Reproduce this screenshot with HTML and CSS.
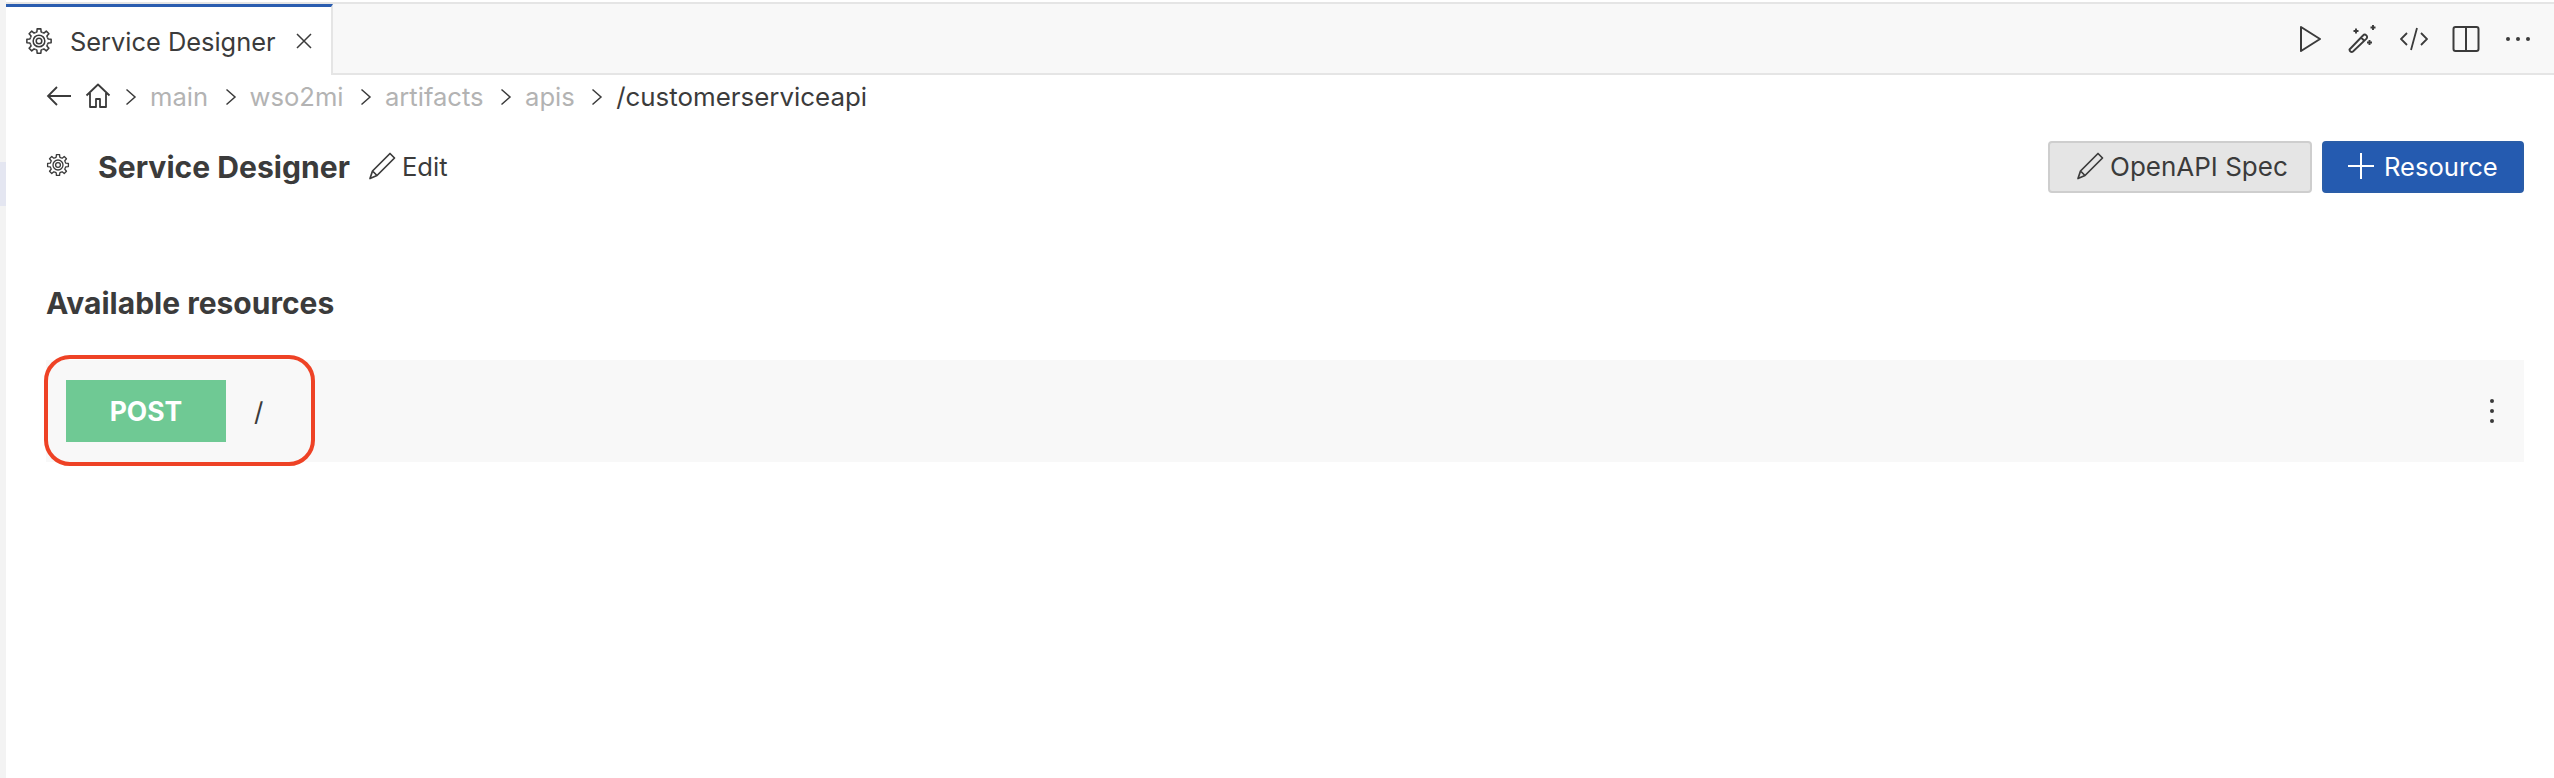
FILE: index.html
```html
<!DOCTYPE html>
<html lang="en">
<head>
    <meta charset="UTF-8">
    <meta name="viewport" content="width=device-width, initial-scale=1.0">
    <title>Service Designer</title>
    <link rel="stylesheet" href="styles.css">
</head>
<body>
<svg class="defs" width="0" height="0">
    <symbol id="gear" viewBox="0 0 24 24">
        <g fill="none" stroke="currentColor" stroke-width="1.3" stroke-linejoin="round">
            <path id="tooth" d="M9 4.8l1.2-.6.2-2.6h3.2l.2 2.6 1.2.6"/>
            <use href="#tooth" transform="rotate(45 12 12)"/>
            <use href="#tooth" transform="rotate(90 12 12)"/>
            <use href="#tooth" transform="rotate(135 12 12)"/>
            <use href="#tooth" transform="rotate(180 12 12)"/>
            <use href="#tooth" transform="rotate(225 12 12)"/>
            <use href="#tooth" transform="rotate(270 12 12)"/>
            <use href="#tooth" transform="rotate(315 12 12)"/>
            <circle cx="12" cy="12" r="5"/>
            <circle cx="12" cy="12" r="2.4"/>
        </g>
    </symbol>
    <symbol id="pencil" viewBox="0 0 28 28">
        <path d="M22 1.500l4.500 4.500L9 23.500l-7 3 2.500-7.500zM4.500 19l4.500 4.500" fill="none" stroke="currentColor" stroke-width="1.700" stroke-linejoin="round"/>
    </symbol>
</svg>

<div class="app">
    <div class="side-strip">
        <div class="side-mark"></div>
    </div>
    <div class="main">
        <div class="tab-bar">
            <div class="tab">
                <svg class="tab-gear"><use href="#gear"/></svg>
                <span class="tab-title">Service Designer</span>
                <svg class="tab-close" viewBox="0 0 18 18"><path d="M2 2l14 14M16 2L2 16" stroke="currentColor" stroke-width="1.500" fill="none"/></svg>
            </div>
            <div class="tab-actions">
                <svg class="act" viewBox="0 0 28 28"><path d="M5 2L24 14 5 26z" fill="none" stroke="currentColor" stroke-width="2" stroke-linejoin="round"/></svg>
                <svg class="act" viewBox="0 0 28 28" fill="none" stroke="currentColor"><path d="M1.500 24.500l13.500-14a2.300 2.300 0 0 1 3.500 3.200L5 26.500a2.200 2.200 0 0 1-3.500-2zM13 12.500l3.500 3.500" stroke-width="1.900"/><path d="M8 3.500v5M5.500 6h5M25 0v5M22.500 2.500h5M21.500 15v5M19 17.500h5" stroke-width="1.900"/></svg>
                <svg class="act" viewBox="0 0 28 28" fill="none" stroke="currentColor" stroke-width="1.800"><path d="M7 8l-6 6 6 6M21 8l6 6-6 6M17 3l-6 22"/></svg>
                <svg class="act" viewBox="0 0 28 28" fill="none" stroke="currentColor" stroke-width="2"><rect x="1.500" y="2" width="25" height="24" rx="2"/><path d="M14 2v24"/></svg>
                <svg class="act" viewBox="0 0 28 28" fill="currentColor"><circle cx="4" cy="14" r="2"/><circle cx="14" cy="14" r="2"/><circle cx="24" cy="14" r="2"/></svg>
            </div>
        </div>

        <div class="content">
            <div class="crumbs">
                <svg class="back" viewBox="0 0 26 22"><path d="M25 11H2M11 2l-9 9 9 9" fill="none" stroke="currentColor" stroke-width="1.800"/></svg>
                <svg class="home" viewBox="0 0 26 26"><path d="M1.500 12.500L13 1.500l11.500 11M5 10v14h6v-8h4v8h6V10" fill="none" stroke="currentColor" stroke-width="1.800" stroke-linejoin="round"/></svg>
                <svg class="sep" viewBox="0 0 12 18"><path d="M1.500 1.500L10 9l-8.500 7.500" fill="none" stroke="currentColor" stroke-width="1.500"/></svg>
                <span class="crumb">main</span>
                <svg class="sep" viewBox="0 0 12 18"><path d="M1.500 1.500L10 9l-8.500 7.500" fill="none" stroke="currentColor" stroke-width="1.500"/></svg>
                <span class="crumb">wso2mi</span>
                <svg class="sep" viewBox="0 0 12 18"><path d="M1.500 1.500L10 9l-8.500 7.500" fill="none" stroke="currentColor" stroke-width="1.500"/></svg>
                <span class="crumb">artifacts</span>
                <svg class="sep" viewBox="0 0 12 18"><path d="M1.500 1.500L10 9l-8.500 7.500" fill="none" stroke="currentColor" stroke-width="1.500"/></svg>
                <span class="crumb">apis</span>
                <svg class="sep" viewBox="0 0 12 18"><path d="M1.500 1.500L10 9l-8.500 7.500" fill="none" stroke="currentColor" stroke-width="1.500"/></svg>
                <span class="crumb current">/customerserviceapi</span>
            </div>

            <div class="header">
                <svg class="title-gear"><use href="#gear"/></svg>
                <h1>Service Designer</h1>
                <div class="edit">
                    <svg class="edit-pen"><use href="#pencil"/></svg>
                    <span>Edit</span>
                </div>
                <div class="header-btns">
                    <button class="btn btn-grey"><svg class="edit-pen"><use href="#pencil"/></svg>OpenAPI Spec</button>
                    <button class="btn btn-blue"><svg class="plus" viewBox="0 0 26 26"><path d="M13 0v26M0 13h26" stroke="currentColor" stroke-width="2"/></svg>Resource</button>
                </div>
            </div>

            <h2>Available resources</h2>

            <div class="resource">
                <div class="method">POST</div>
                <div class="res-path">/</div>
                <svg class="kebab" viewBox="0 0 4 24" fill="currentColor"><circle cx="2" cy="2" r="2"/><circle cx="2" cy="12" r="2"/><circle cx="2" cy="22" r="2"/></svg>
                <div class="callout"></div>
            </div>
        </div>
    </div>
</div>
</body>
</html>
```

FILE: styles.css
```css
* {
    box-sizing: border-box;
}

body {
    margin: 0;
    height: 778px;
    overflow: hidden;
    background-color: white;
    color: #3b3b3b;
    font-family: Inter, 'Noto Sans', sans-serif;
}

.defs {
    position: absolute;
}

.app {
    display: flex;
    height: 100%;
}

.side-strip {
    width: 6px;
    padding-top: 162px;
    background-color: #f3f3f3;
    flex-shrink: 0;
}

.side-mark {
    height: 44px;
    background-color: #e4e6f1;
}

.main {
    flex: 1;
    min-width: 0;
}

.tab-bar {
    display: flex;
    justify-content: space-between;
    align-items: stretch;
    height: 73px;
    margin-top: 2px;
    background-color: #f8f8f8;
    border-top: 2px solid #e5e5e5;
    border-bottom: 2px solid #e5e5e5;
}

.tab {
    display: flex;
    align-items: center;
    width: 327px;
    margin-bottom: -2px;
    padding-left: 19px;
    background-color: white;
    border-top: 3px solid #2a5db0;
    border-right: 2px solid #e5e5e5;
}

.tab-gear {
    width: 28px;
    height: 28px;
}

.tab-title {
    margin-left: 17px;
    font-size: 25.4px;
}

.tab-close {
    width: 18px;
    height: 18px;
    margin-left: 19px;
}

.tab-actions {
    display: flex;
    align-items: center;
    gap: 24px;
    padding-right: 22px;
}

.act {
    width: 28px;
    height: 28px;
}

.content {
    padding: 0 30px 0 40px;
}

.crumbs {
    display: flex;
    align-items: center;
    height: 42px;
    font-size: 25.6px;
}

.back {
    width: 26px;
    height: 22px;
}

.home {
    width: 26px;
    height: 26px;
    margin-left: 13px;
}

.sep {
    width: 12px;
    height: 18px;
    margin: 2px 13px 0 14px;
}

.crumb {
    color: #b3b3b3;
    margin-right: 2.400px;
}

.crumb.current {
    color: #3b3b3b;
    font-size: 25.9px;
}

.header {
    display: flex;
    align-items: center;
    height: 52px;
    margin-top: 24px;
}

.title-gear {
    width: 24px;
    height: 24px;
    margin-bottom: 4px;
}

h1 {
    margin: 0 0 1px 28px;
    font-size: 30.1px;
    font-weight: 700;
}

h2 {
    margin: 92px 0 0;
    font-size: 30px;
    font-weight: 700;
    line-height: 36px;
}

.edit {
    display: flex;
    align-items: center;
    margin-left: 18px;
    margin-bottom: 2px;
    font-size: 25.6px;
}

.edit-pen {
    width: 28px;
    height: 28px;
    margin-right: 6px;
}

.header-btns {
    display: flex;
    gap: 10px;
    margin-left: auto;
}

.btn {
    display: flex;
    align-items: center;
    height: 52px;
    padding: 0 0 2px 24px;
    font-family: inherit;
    font-size: 26px;
    white-space: nowrap;
    border-radius: 4px;
}

.btn-grey {
    width: 264px;
    padding-left: 26px;
    color: #3b3b3b;
    background-color: #e5e5e5;
    border: 2px solid #cecece;
}

.btn-blue {
    width: 202px;
    padding-left: 24px;
    font-size: 25.6px;
    color: white;
    background-color: #255bb0;
    border: 2px solid #2a5da8;
}

.plus {
    width: 26px;
    height: 26px;
    margin-right: 10px;
}

.resource {
    position: relative;
    display: flex;
    align-items: center;
    height: 102px;
    margin-top: 39px;
    padding: 0 20px;
    background-color: #f8f8f8;
}

.method {
    width: 160px;
    height: 62px;
    line-height: 62px;
    text-align: center;
    color: white;
    background-color: #6fc994;
    font-size: 26.500px;
    font-weight: 700;
}

.res-path {
    margin-left: 28px;
    font-size: 26px;
}

.kebab {
    width: 4px;
    height: 24px;
    margin-left: auto;
    margin-right: 10px;
}

.callout {
    position: absolute;
    left: -2px;
    top: -5px;
    width: 271px;
    height: 111px;
    border: 4px solid #ee4225;
    border-radius: 26px;
}
```
